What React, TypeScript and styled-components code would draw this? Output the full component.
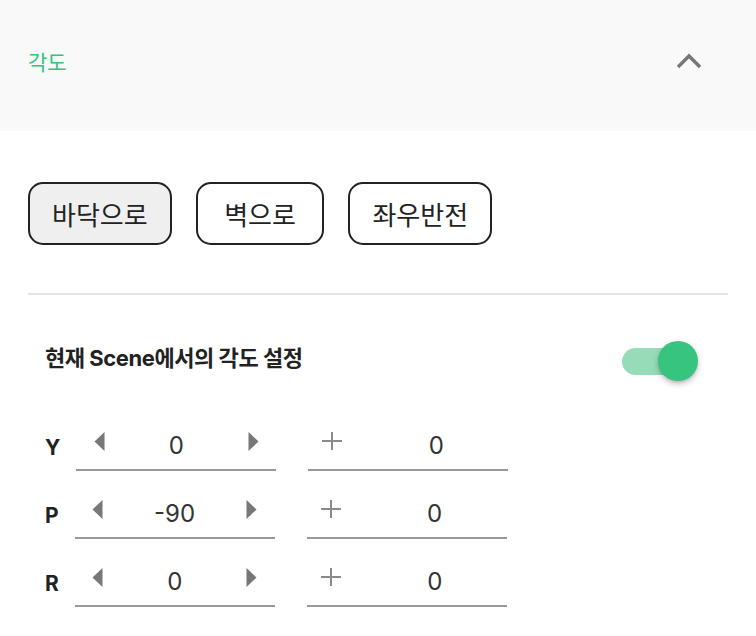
import React from 'react';
import styled, { createGlobalStyle } from 'styled-components';

const GlobalStyle = createGlobalStyle`
  body {
    margin: 0;
    background: #ffffff;
    font-family: Inter, 'Noto Sans CJK KR', sans-serif;
  }
`;

const StyledPanel = styled.main`
  width: 756px;
  background: #ffffff;
`;

const Header = styled.header`
  display: flex;
  align-items: center;
  justify-content: space-between;
  height: 131px;
  padding: 0 54px 9px 28px;
  box-sizing: border-box;
  background: #f9f9f9;
`;

const HeaderTitle = styled.h2`
  margin: 0;
  font-family: 'Noto Sans CJK KR', sans-serif;
  font-size: 21px;
  font-weight: 400;
  line-height: 1;
  color: #34c47e;
`;

const Body = styled.section`
  padding: 51px 28px 0;
`;

const ButtonRow = styled.div`
  display: flex;
  gap: 24px;
  padding-bottom: 48px;
  border-bottom: 2px solid #e4e4e4;
`;

const PresetButton = styled.button<{ $active?: boolean; $padding: number }>`
  height: 63px;
  padding: 0 ${(p) => p.$padding}px;
  border: 2px solid #222222;
  border-radius: 15px;
  background: ${(p) => (p.$active ? '#efefef' : '#ffffff')};
  font-family: 'Noto Sans CJK KR', sans-serif;
  font-size: 26px;
  color: #222222;
  cursor: pointer;
`;

const Section = styled.div`
  padding: 0 17px;
`;

const ToggleRow = styled.div`
  display: flex;
  align-items: center;
  justify-content: space-between;
  height: 48px;
  margin-top: 42px;
  padding-right: 21px;
`;

const ToggleTitle = styled.span`
  font-family: Inter, 'Noto Sans CJK KR', sans-serif;
  font-size: 22px;
  font-weight: 700;
  letter-spacing: -0.02em;
  color: #222222;
  margin-top: -10px;
`;

const Switch = styled.div`
  position: relative;
  width: 68px;
  height: 27px;
`;

const Track = styled.div`
  width: 68px;
  height: 27px;
  border-radius: 14px;
  background: #97dcb8;
`;

const Knob = styled.div`
  position: absolute;
  left: 36px;
  top: -7px;
  width: 40px;
  height: 40px;
  border-radius: 50%;
  background: #36c47e;
  box-shadow: 0 3px 6px rgba(0, 0, 0, 0.22), 0 2px 2px rgba(0, 0, 0, 0.08);
`;

const AxisList = styled.div`
  display: flex;
  flex-direction: column;
  gap: 18px;
  margin-top: 36px;
`;

const AxisRow = styled.div`
  display: flex;
  align-items: center;
  gap: 32px;
`;

const AxisLabel = styled.span`
  font-family: Inter, sans-serif;
  font-size: 21px;
  font-weight: 700;
  color: #222222;
  margin-right: -16px;
  margin-top: 2px;
`;

const Field = styled.div`
  display: flex;
  align-items: center;
  width: 200px;
  height: 48px;
  border-bottom: 2px solid #999999;
`;

const ArrowButton = styled.button`
  display: flex;
  align-items: center;
  justify-content: center;
  width: 46px;
  height: 48px;
  padding: 0 0 8px;
  border: none;
  background: none;
  cursor: pointer;
`;

const PlusBox = styled.span`
  display: flex;
  align-items: center;
  justify-content: center;
  width: 48px;
  height: 48px;
  padding-bottom: 8px;
  box-sizing: border-box;
`;

const Value = styled.span<{ $offset?: number }>`
  flex: 1;
  text-align: center;
  padding-left: ${(p) => p.$offset || 0}px;
  font-family: Inter, sans-serif;
  font-size: 24px;
  color: #333333;
`;

function Chevron() {
  return (
    <svg width="26" height="16" viewBox="0 0 26 16">
      <path d="M2 14 L13 3 L24 14" fill="none" stroke="#777777" strokeWidth="3.4" />
    </svg>
  );
}

function Triangle({ dir }: { dir: 'left' | 'right' }) {
  return (
    <svg width="11" height="19" viewBox="0 0 11 19">
      {dir === 'left' ? (
        <path d="M10.5 0 L10.5 19 L0.5 9.5 Z" fill="#777777" />
      ) : (
        <path d="M0.5 0 L0.5 19 L10.5 9.5 Z" fill="#777777" />
      )}
    </svg>
  );
}

function Plus() {
  return (
    <svg width="20" height="20" viewBox="0 0 20 20">
      <path d="M10 1 V19 M0 10 H20" stroke="#8a8a8a" strokeWidth="2" />
    </svg>
  );
}

const axes = [
  { label: 'Y', value: '0', offset: '0' },
  { label: 'P', value: '-90', offset: '0' },
  { label: 'R', value: '0', offset: '0' },
];

function App() {
  return (
    <StyledPanel>
      <GlobalStyle />
      <Header>
        <HeaderTitle>각도</HeaderTitle>
        <Chevron />
      </Header>
      <Body>
        <ButtonRow>
          <PresetButton $active $padding={22}>바닥으로</PresetButton>
          <PresetButton $padding={26.5}>벽으로</PresetButton>
          <PresetButton $padding={22}>좌우반전</PresetButton>
        </ButtonRow>
        <Section>
          <ToggleRow>
            <ToggleTitle>현재 Scene에서의 각도 설정</ToggleTitle>
            <Switch>
              <Track />
              <Knob />
            </Switch>
          </ToggleRow>
          <AxisList>
            {axes.map((a) => (
              <AxisRow key={a.label}>
                <AxisLabel>{a.label}</AxisLabel>
                <Field>
                  <ArrowButton>
                    <Triangle dir="left" />
                  </ArrowButton>
                  <Value>{a.value}</Value>
                  <ArrowButton>
                    <Triangle dir="right" />
                  </ArrowButton>
                </Field>
                <Field>
                  <PlusBox>
                    <Plus />
                  </PlusBox>
                  <Value $offset={8}>{a.offset}</Value>
                </Field>
              </AxisRow>
            ))}
          </AxisList>
        </Section>
      </Body>
    </StyledPanel>
  );
}

export default App;
